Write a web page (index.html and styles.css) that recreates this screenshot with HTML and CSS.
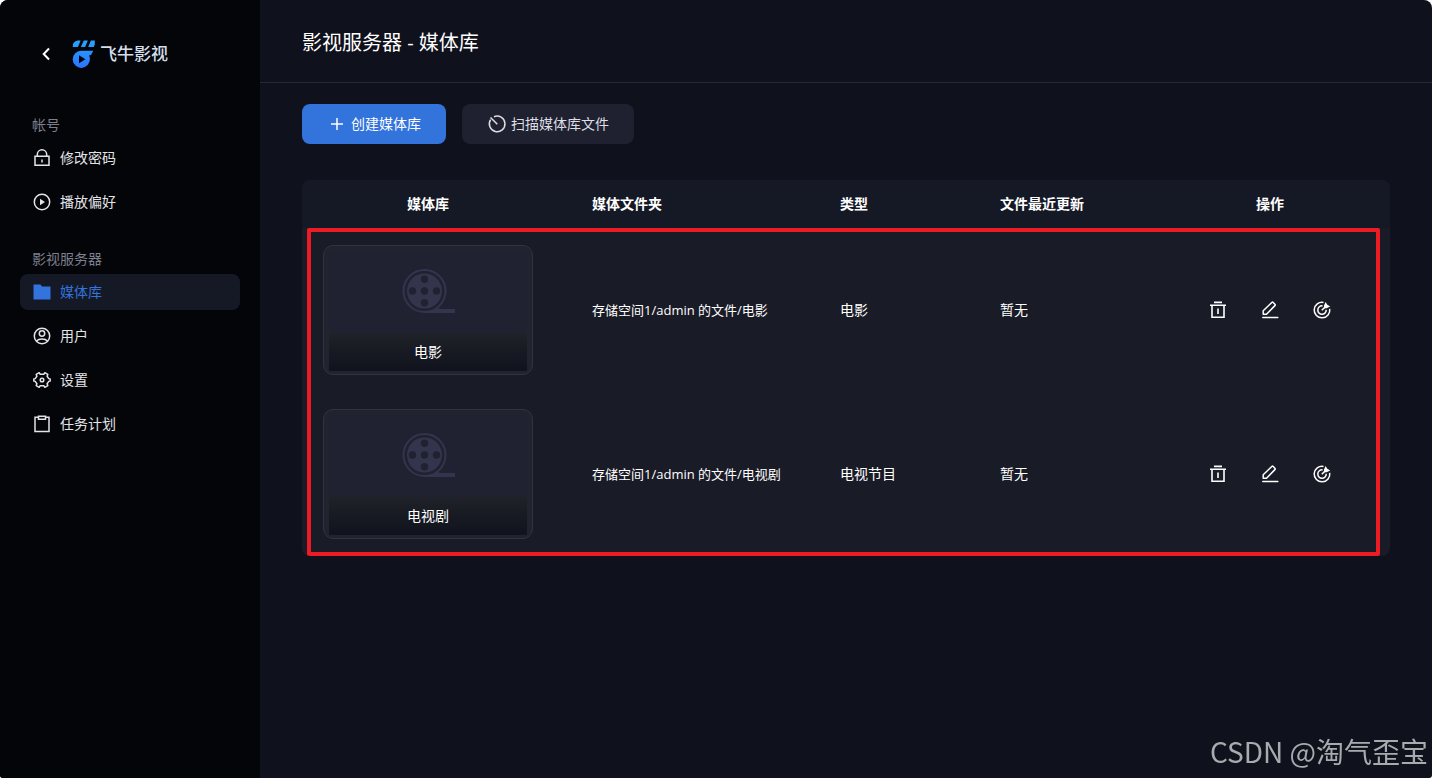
FILE: index.html
```
<!DOCTYPE html>
<html lang="zh-CN">
<head>
    <meta charset="UTF-8">
    <meta name="viewport" content="width=device-width, initial-scale=1.0">
    <title>影视服务器 - 媒体库</title>
    <link rel="stylesheet" href="styles.css">
</head>
<body>
    <!-- Shared shapes -->
    <svg class="sprite" aria-hidden="true">
        <symbol id="reel" viewBox="-1 0 54 46">
            <circle cx="22.5" cy="22" r="21" fill="none" stroke="currentColor" stroke-width="2"/>
            <path fill="currentColor" fill-rule="evenodd" d="M22.5 4.5a17.5 17.5 0 1 0 0 35a17.5 17.5 0 1 0 0-35zM22.5 6.5a3.700 3.700 0 1 1 0 7.400a3.700 3.700 0 1 1 0-7.400zM22.500 18.300a3.700 3.700 0 1 1 0 7.400a3.700 3.700 0 1 1 0-7.400zM22.500 30.100a3.700 3.700 0 1 1 0 7.400a3.700 3.700 0 1 1 0-7.400zM10.500 18.300a3.700 3.700 0 1 1 0 7.400a3.700 3.700 0 1 1 0-7.400zM34.500 18.300a3.700 3.700 0 1 1 0 7.400a3.700 3.700 0 1 1 0-7.400z"/>
            <path fill="currentColor" d="M22 42c6 0 10-1 14-3.200l2 1.200h15v4H22z"/>
        </symbol>
        <symbol id="trash" viewBox="0 0 20 20">
            <path fill="none" stroke="currentColor" stroke-width="1.600" d="M6 2.400h8M2 5.200h16M4 5.200v12h12v-12M10 8.500v5.500"/>
        </symbol>
        <symbol id="pencil" viewBox="0 0 20 20">
            <path fill="none" stroke="currentColor" stroke-width="1.500" stroke-linejoin="round" stroke-linecap="round" d="M3.200 14.200v-3.400l8.600-8.300a1 1 0 0 1 1.400 0l1.700 1.700a1 1 0 0 1 0 1.400L6.500 14.200zM2.800 17.600h15"/>
        </symbol>
        <symbol id="scan" viewBox="0 0 20 20">
            <path fill="none" stroke="currentColor" stroke-width="1.500" d="M11.500 2.400A7.800 7.800 0 1 0 17.700 8.800M10.600 5.900A4.200 4.200 0 1 0 14.200 9.800M9.800 10.300l3.400-3.400"/>
            <path fill="currentColor" d="M12 8.200V5.600L13.600 2l1.700 2.700 2.900 1.700-3.600 1.800z"/>
        </symbol>
    </svg>

    <div class="app">
        <aside class="sidebar">
            <div class="brand">
                <button class="icon-btn" type="button" aria-label="返回">
                    <svg viewBox="0 0 20 20"><path fill="none" stroke="currentColor" stroke-width="2" d="M13 4.500L7.700 10l5.300 5.500"/></svg>
                </button>
                <a class="logo" href="#">
                    <svg viewBox="0 0 24 28" aria-hidden="true">
                        <defs>
                            <linearGradient id="logoFill" x1="0" y1="0" x2="0" y2="28" gradientUnits="userSpaceOnUse">
                                <stop offset="0" stop-color="#25a5ff"/>
                                <stop offset="1" stop-color="#2a74ff"/>
                            </linearGradient>
                        </defs>
                        <g fill="url(#logoFill)">
                            <path d="M6.800.600h1.800L6 7H.800V5.600C.8 2.800 3.500.6 6.800.6z"/>
                            <path d="M11.800.600h4L13.200 7H8.800z"/>
                            <path d="M18.900.600h3.900V4.200L21.800 7h-5.600z"/>
                            <path fill-rule="evenodd" d="M9 10.700h12.200l-1.600 3.400c-.5 1-1.400 1.400-2.500 1.500.5 1 .8 2.200.8 3.300A8.600 8.600 0 1 1 9 10.700zM7 15.300v8l6.500-4z"/>
                        </g>
                    </svg>
                    <span>飞牛影视</span>
                </a>
            </div>

            <nav>
                <section class="group">
                    <h2>帐号</h2>
                    <ul>
                        <li><a href="#">
                            <svg viewBox="0 0 20 20"><path fill="none" stroke="currentColor" stroke-width="1.500" d="M3 8.300h14v9H3zM5.300 8V6.500a4.700 4.700 0 0 1 9.400 0V8M10 11.500v3"/></svg>
                            <span>修改密码</span></a></li>
                        <li><a href="#">
                            <svg viewBox="0 0 20 20"><circle cx="10" cy="10" r="7.700" fill="none" stroke="currentColor" stroke-width="1.500"/><path fill="currentColor" d="M8 6.700v6.600l5-3.300z"/></svg>
                            <span>播放偏好</span></a></li>
                    </ul>
                </section>
                <section class="group">
                    <h2>影视服务器</h2>
                    <ul>
                        <li><a class="active" href="#">
                            <svg viewBox="0 0 20 20"><path fill="currentColor" d="M1.500 2.500h7l1.500 2h8.500v13h-17z"/></svg>
                            <span>媒体库</span></a></li>
                        <li><a href="#">
                            <svg viewBox="0 0 20 20"><g fill="none" stroke="currentColor" stroke-width="1.500"><circle cx="10" cy="10" r="7.700"/><circle cx="10" cy="7.500" r="2.700"/><path d="M4.300 15.200c1.500-1.700 3.500-2.200 5.700-2.200s4.200.5 5.700 2.200"/></g></svg>
                            <span>用户</span></a></li>
                        <li><a href="#">
                            <svg viewBox="0 0 20 20"><g fill="none" stroke="currentColor" stroke-width="1.500" stroke-linejoin="round"><path d="M8.200 4.300 7.200 2.700 4.200 4.400l.7 1.900-1.700 2.300-1.400.4v2l1.400.4 1.700 2.300-.7 1.900 3 1.700 1-1.600h3.600l1 1.600 3-1.700-.7-1.900 1.700-2.300 1.400-.4V9l-1.400-.4-1.700-2.300.7-1.900-3-1.700-1 1.600z"/><circle cx="10" cy="10" r="1.800"/></g></svg>
                            <span>设置</span></a></li>
                        <li><a href="#">
                            <svg viewBox="0 0 20 20"><path fill="none" stroke="currentColor" stroke-width="1.500" d="M6.500 3.300H3v14.200h14V3.300h-3.500M6.500 2.300h7v3h-7z"/></svg>
                            <span>任务计划</span></a></li>
                    </ul>
                </section>
            </nav>
        </aside>

        <main class="main">
            <header class="page-header">
                <h1>影视服务器 - 媒体库</h1>
            </header>

            <div class="content">
                <div class="toolbar">
                    <button class="btn btn-primary" type="button">
                        <svg viewBox="0 0 20 20"><path fill="none" stroke="currentColor" stroke-width="1.500" d="M4 10h12M10 4v12"/></svg>
                        创建媒体库
                    </button>
                    <button class="btn" type="button">
                        <svg viewBox="0 0 20 20"><path fill="none" stroke="currentColor" stroke-width="1.500" d="M7 2.800A7.800 7.800 0 1 1 3.600 5.700M3.500 3.500l6.800 6.700"/></svg>
                        扫描媒体库文件
                    </button>
                </div>

                <div class="table-wrap">
                    <table>
                        <thead>
                            <tr>
                                <th class="col-library">媒体库</th>
                                <th class="col-folder">媒体文件夹</th>
                                <th class="col-type">类型</th>
                                <th class="col-updated">文件最近更新</th>
                                <th class="col-actions">操作</th>
                            </tr>
                        </thead>
                        <tbody>
                            <tr>
                                <td class="col-library">
                                    <div class="poster">
                                        <div class="poster-inner">
                                            <svg class="reel"><use href="#reel"/></svg>
                                            <span class="poster-name">电影</span>
                                        </div>
                                    </div>
                                </td>
                                <td class="col-folder">存储空间1/admin 的文件/电影</td>
                                <td>电影</td>
                                <td>暂无</td>
                                <td>
                                    <div class="actions">
                                        <button class="icon-btn" type="button" aria-label="删除"><svg><use href="#trash"/></svg></button>
                                        <button class="icon-btn" type="button" aria-label="编辑"><svg><use href="#pencil"/></svg></button>
                                        <button class="icon-btn" type="button" aria-label="扫描"><svg><use href="#scan"/></svg></button>
                                    </div>
                                </td>
                            </tr>
                            <tr>
                                <td class="col-library">
                                    <div class="poster">
                                        <div class="poster-inner">
                                            <svg class="reel"><use href="#reel"/></svg>
                                            <span class="poster-name">电视剧</span>
                                        </div>
                                    </div>
                                </td>
                                <td class="col-folder">存储空间1/admin 的文件/电视剧</td>
                                <td>电视节目</td>
                                <td>暂无</td>
                                <td>
                                    <div class="actions">
                                        <button class="icon-btn" type="button" aria-label="删除"><svg><use href="#trash"/></svg></button>
                                        <button class="icon-btn" type="button" aria-label="编辑"><svg><use href="#pencil"/></svg></button>
                                        <button class="icon-btn" type="button" aria-label="扫描"><svg><use href="#scan"/></svg></button>
                                    </div>
                                </td>
                            </tr>
                        </tbody>
                    </table>
                    <div class="highlight"></div>
                </div>
            </div>
        </main>
    </div>

    <div class="watermark">CSDN @淘气歪宝</div>
</body>
</html>
```
FILE: styles.css
```
* {
    box-sizing: border-box;
}

html {
    background-color: #fff;
}

body {
    margin: 0;
    font-family: "Open Sans", "Noto Sans CJK SC", sans-serif;
    font-size: 14px;
    line-height: 20px;
    color: #fff;
}

h1, h2, ul {
    margin: 0;
    padding: 0;
    font-weight: normal;
}

ul {
    list-style: none;
}

a {
    color: inherit;
    text-decoration: none;
}

button {
    font: inherit;
    color: inherit;
    border: none;
    cursor: pointer;
}

svg {
    display: block;
    flex: none;
    width: 20px;
    height: 20px;
}

.sprite {
    display: none;
}

.app {
    display: flex;
    min-height: 100vh;
    border-radius: 8px 8px 3px 3px;
    overflow: hidden;
    background-color: #0f111c;
}

/* Sidebar */
.sidebar {
    flex: none;
    width: 260px;
    padding: 34px 20px;
    background-color: #030509;
}

.brand {
    display: flex;
    align-items: center;
    gap: 16px;
    height: 40px;
    margin-bottom: 36px;
    padding-left: 16px;
}

.logo {
    display: flex;
    align-items: center;
    gap: 4px;
    font-size: 17px;
    font-weight: 500;
    line-height: 22px;
    color: #d3dfeb;
}

.logo svg {
    width: 24px;
    height: 28px;
}

.icon-btn {
    padding: 0;
    background: none;
}

.group {
    margin-bottom: 24px;
}

.group h2 {
    padding-left: 12px;
    font-size: 14px;
    line-height: 30px;
    color: #7d7f8c;
}

.group ul {
    display: grid;
    gap: 8px;
}

.group a {
    display: flex;
    align-items: center;
    gap: 8px;
    height: 36px;
    padding: 0 12px;
    border-radius: 8px;
    color: #e3e4e8;
}

.group a.active {
    background-color: #151926;
    color: #3273dc;
}

/* Main area */
.main {
    flex: 1;
    min-width: 0;
}

.page-header {
    padding: 28px 42px 24px;
    border-bottom: 1px solid #272933;
}

.page-header h1 {
    font-size: 20px;
    line-height: 30px;
}

.content {
    padding: 21px 42px;
}

.toolbar {
    display: flex;
    gap: 16px;
    margin-bottom: 36px;
}

.btn {
    display: flex;
    align-items: center;
    gap: 4px;
    height: 40px;
    padding: 0 25px;
    border-radius: 8px;
    background-color: #1f2130;
    color: #dedfe4;
}

.btn-primary {
    background-color: #3273dc;
    color: #fff;
}

/* Library table */
.table-wrap {
    position: relative;
    border-radius: 8px;
    overflow: hidden;
}

table {
    width: 100%;
    table-layout: fixed;
    border-collapse: collapse;
    background-color: #191b26;
}

th, td {
    padding: 0 20px;
    text-align: left;
}

th {
    height: 48px;
    background-color: #151926;
    font-weight: bold;
}

td {
    height: 164px;
}

.col-library {
    width: 252px;
    padding: 0 21px;
    text-align: center;
}

.col-folder {
    padding-left: 38px;
}

td.col-folder {
    font-size: 13px;
}

.col-type {
    width: 160px;
}

.col-updated {
    width: 170px;
}

.col-actions {
    width: 240px;
    text-align: center;
}

.poster {
    height: 130px;
    padding: 5px 5px 3px;
    border: 1px solid #31333e;
    border-radius: 10px;
    background-color: #21232e;
}

.poster-inner {
    display: flex;
    flex-direction: column;
    align-items: center;
    justify-content: space-between;
    height: 100%;
    padding-top: 18px;
    background-color: #202232;
}

.reel {
    width: 54px;
    height: 46px;
    color: #32354b;
}

.poster-name {
    width: 100%;
    line-height: 38px;
    background-image: linear-gradient(#202229, #10121d);
}

.actions {
    display: flex;
    justify-content: center;
    gap: 32px;
}

/* Frame around the library rows */
.highlight {
    position: absolute;
    top: 48px;
    right: 10px;
    bottom: 0;
    left: 5px;
    border: 4px solid #ed1c24;
    border-radius: 2px;
    pointer-events: none;
}

.watermark {
    position: fixed;
    right: 4px;
    bottom: 6px;
    font-family: "Noto Sans CJK SC", sans-serif;
    font-size: 28px;
    line-height: 42px;
    color: #a9aaae;
}
```
